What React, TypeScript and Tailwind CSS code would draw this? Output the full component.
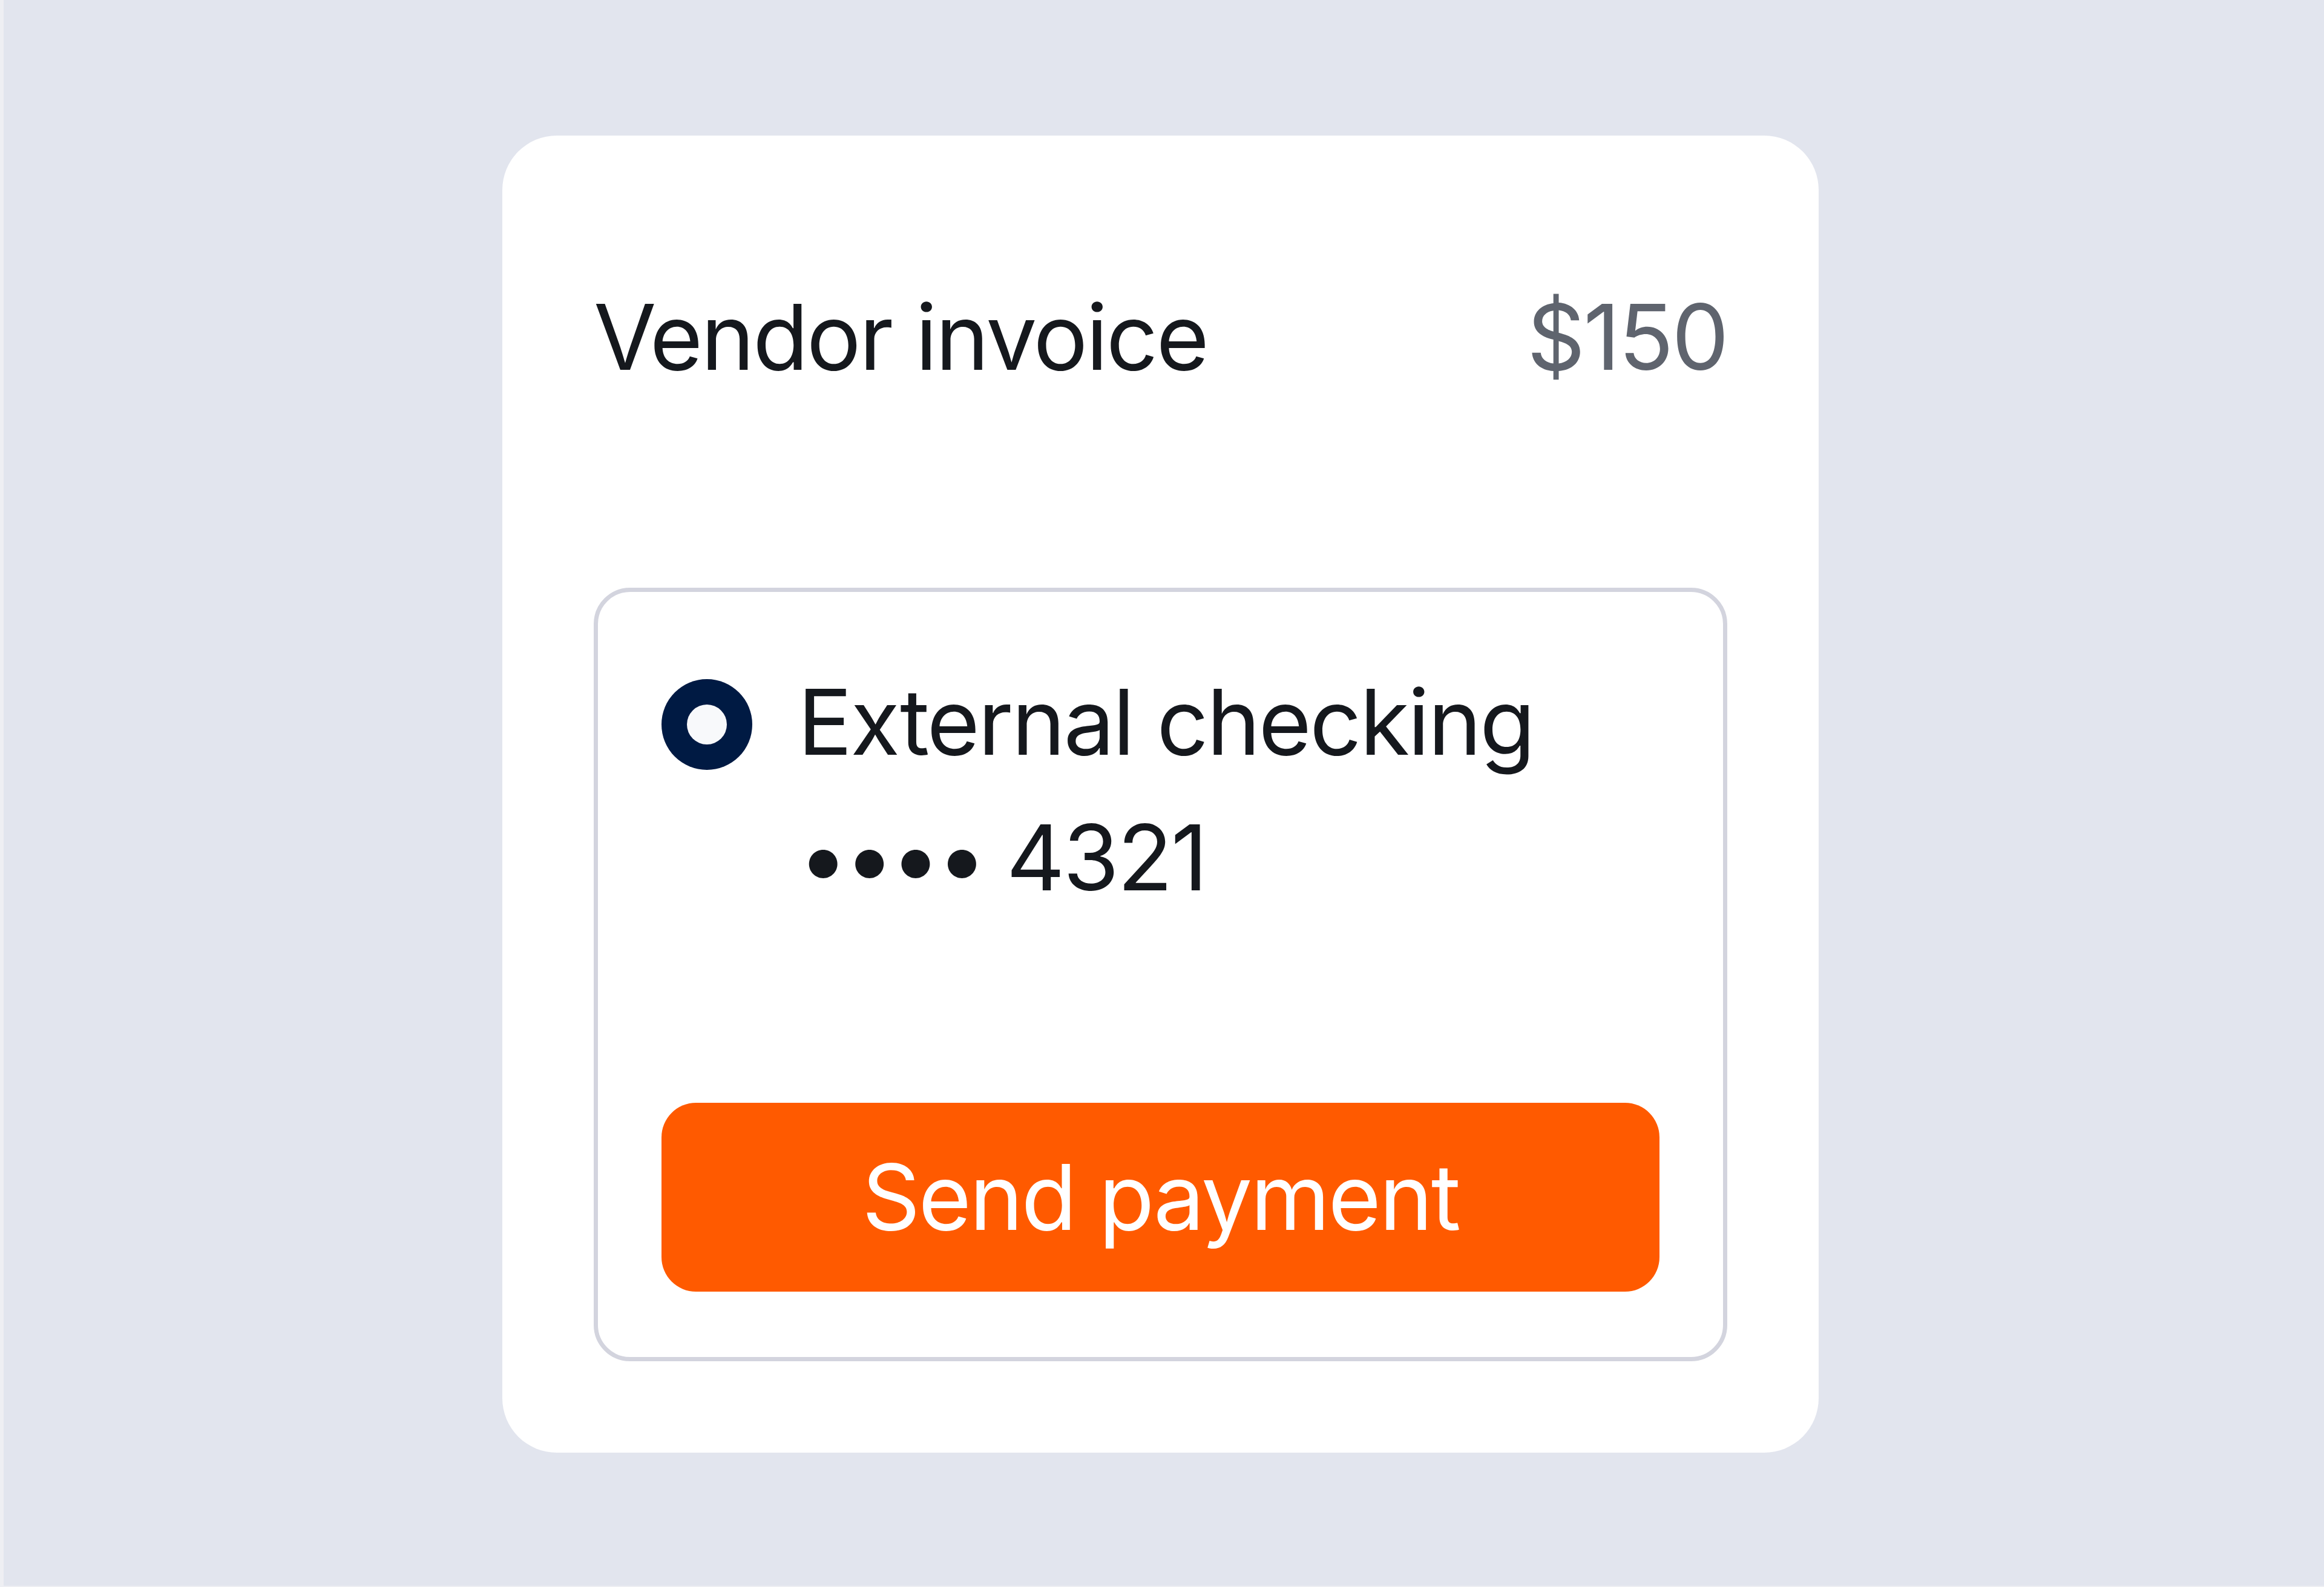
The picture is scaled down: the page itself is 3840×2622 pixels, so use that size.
import React from "react";

export default function App() {
  return (
    <div
      className="w-[3840px] h-[2622px] bg-[#e2e5ee] border-l-[6px] border-b-[2px] border-[#eeeff3] pl-[824px] pt-[224px]"
      style={{ fontFamily: 'Inter, "Noto Sans", sans-serif' }}
    >
      <div className="w-[2175px] h-[2176px] bg-white rounded-[90px] px-[151px] pt-[221px]">
        <div className="flex justify-between items-start text-[150px] leading-[224px] tracking-[-3px]">
          <span className="text-[#15181d]">Vendor invoice</span>
          <span className="text-[#5f646e]">$150</span>
        </div>
        <div className="mt-[302px] h-[1278px] border-[7px] border-[#d3d4de] rounded-[60px] px-[105px] pt-[103px] flex flex-col">
          <div className="flex items-start gap-[75px]">
            <div className="mt-[41px] w-[150px] h-[150px] shrink-0 rounded-full bg-[#001a43] flex items-center justify-center">
              <div className="w-[66px] h-[66px] rounded-full bg-[#f8f9fb]" />
            </div>
            <div className="text-[150px] leading-[224px] text-[#15181d] tracking-[-3px]">
              <div>External checking</div>
              <div>
                <span className="tracking-[-8px]">••••</span> 4321
              </div>
            </div>
          </div>
          <button className="mt-[293px] h-[312px] w-full rounded-[57px] bg-[#ff5a00] text-white text-[150px] leading-none tracking-[-3px] flex items-center justify-center">
            Send payment
          </button>
        </div>
      </div>
    </div>
  );
}
